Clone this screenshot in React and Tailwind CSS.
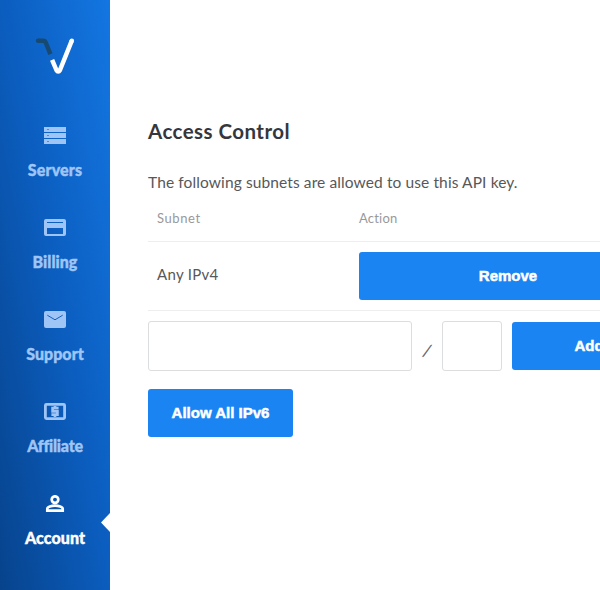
import React from "react";

function Logo() {
  return (
    <svg width="40" height="38" viewBox="0 0 40 38" fill="none" strokeWidth="4.5" className="block">
      <path d="M3 2.8H8.4Q10 2.8 10.7 4.5L15.4 16.2" stroke="#174a73" strokeLinecap="butt" />
      <circle cx="3" cy="2.8" r="2.2" fill="#174a73" />
      <path d="M17.1 21.8L21.4 32Q23.2 35 25 32L36.8 2.7" stroke="#fff" strokeLinejoin="round" />
      <circle cx="36.8" cy="2.7" r="2.25" fill="#fff" />
    </svg>
  );
}

function ServersIcon() {
  return (
    <svg width="22" height="18" viewBox="0 0 22 18">
      <path fill="currentColor" d="M0 0h22v5H0zM0 6h22v5H0zM0 12h22v5H0z" />
      <path fill="#4c8cdc" d="M3 2h2v1H3zM3 8h2v1H3zM3 14h2v1H3z" />
    </svg>
  );
}

function BillingIcon() {
  return (
    <svg width="22" height="18" viewBox="0 0 22 18" fill="currentColor">
      <path fillRule="evenodd" d="M2 0h18a2 2 0 0 1 2 2v13a2 2 0 0 1-2 2H2a2 2 0 0 1-2-2V2a2 2 0 0 1 2-2zM3 3v1h16V3zM3 9v6h16V9z" />
    </svg>
  );
}

function SupportIcon() {
  return (
    <svg width="22" height="18" viewBox="0 0 22 18">
      <rect width="22" height="17" rx="2" fill="currentColor" />
      <path d="M3.3 4.2L11 8.8L18.7 4.2" fill="none" stroke="#1261bd" strokeWidth="1" />
    </svg>
  );
}

function AffiliateIcon() {
  return (
    <svg width="22" height="18" viewBox="0 0 22 18" fill="none" stroke="currentColor">
      <rect x="1.4" y="1.4" width="19.2" height="14.2" rx="1" strokeWidth="2.8" />
      <path d="M14.6 5.2H8.6v3.2h4.8v3.3H7.4M11 3v2M11 12v2" strokeWidth="2.7" />
    </svg>
  );
}

function AccountIcon() {
  return (
    <svg width="22" height="18" viewBox="0 0 22 18" fill="none" stroke="currentColor">
      <circle cx="11" cy="4.6" r="3.3" strokeWidth="2.7" />
      <path d="M3.3 15.7v-2c0-2 4.2-3.1 7.7-3.1s7.7 1.1 7.7 3.1v2z" strokeWidth="2.7" />
    </svg>
  );
}

const items = [
  { label: "Servers", Icon: ServersIcon, text: "tracking-[0.15px]" },
  { label: "Billing", Icon: BillingIcon, text: "tracking-[0.05px]" },
  { label: "Support", Icon: SupportIcon, text: "tracking-[0.05px]" },
  { label: "Affiliate", Icon: AffiliateIcon, text: "tracking-[-0.2px]" },
  { label: "Account", Icon: AccountIcon, text: "tracking-[0.1px]", active: true },
];

function Sidebar() {
  return (
    <aside className="flex h-full w-[110px] shrink-0 flex-col items-center bg-[linear-gradient(to_top_right,#07438c,#0b5dbe_50%,#1476e2)] pt-[38px]">
      <Logo />
      <nav className="mt-[51px] w-full">
        {items.map(({ label, Icon, text, active }) => (
          <a
            key={label}
            className={`relative flex h-[92px] flex-col items-center ${active ? "text-white" : "text-[#9fc5f6]"}`}
          >
            <Icon />
            <span className={`mt-[15px] text-[16px] leading-5 font-black whitespace-nowrap [-webkit-text-stroke:0.4px_currentColor] ${text}`}>{label}</span>
            {active && (
              <span className="absolute top-[18px] right-0 h-[19px] w-[9px] bg-white [clip-path:polygon(100%_0,0_50%,100%_100%)]" />
            )}
          </a>
        ))}
      </nav>
    </aside>
  );
}

const button =
  "flex h-12 shrink-0 items-center justify-center rounded-[3px] bg-[#1a84f3] font-['Liberation_Sans',Arial,sans-serif] text-[15px] font-bold text-white [-webkit-text-stroke:0.5px_white]";

export default function App() {
  return (
    <div className="flex h-[590px] w-[600px] overflow-hidden bg-white font-[Lato,sans-serif] text-[#56585a]">
      <Sidebar />
      <main className="min-w-0 flex-1 overflow-hidden pl-[38px] pt-[117px]">
        <h1 className="text-[20.5px] leading-7 font-bold whitespace-nowrap text-[#35373a]">
          <span className="tracking-[0.45px]">Access Control</span>
        </h1>
        <p className="mt-[25px] text-[15.5px] leading-6 whitespace-nowrap">
          <span className="tracking-[0.11px]">The following subnets are allowed to use this API key.</span>
        </p>
        <div className="flex h-[48px] w-[530px] border-b border-[#eeeeef] pt-[14px] pl-[9px] text-[13px] leading-5 text-[#98999c]">
          <span className="w-[202px] tracking-[0.6px]">Subnet</span>
          <span className="tracking-[0.2px]">Action</span>
        </div>
        <div className="flex h-[69px] w-[530px] border-b border-[#eeeeef] pt-[10px] pl-[9px]">
          <span className="w-[202px] pt-[12px] text-[15px] leading-5 tracking-[0.3px]">Any IPv4</span>
          <button className={`${button} w-[298px]`}>Remove</button>
        </div>
        <div className="flex w-[600px] pt-[10px]">
          <input className="h-[50px] w-[264px] rounded-[3px] border border-[#dcdddf] bg-white" />
          <span className="w-[30px] pt-[19px] text-center text-[15px] leading-5">
            <span className="inline-block -skew-x-[18deg] [-webkit-text-stroke:0.3px_currentColor]">/</span>
          </span>
          <input className="h-[50px] w-[60px] rounded-[3px] border border-[#dcdddf] bg-white" />
          <button className={`${button} mt-px ml-[10px] w-[154px]`}>Add</button>
        </div>
        <button className={`${button} mt-[18px] w-[145px]`}>Allow All IPv6</button>
      </main>
    </div>
  );
}
